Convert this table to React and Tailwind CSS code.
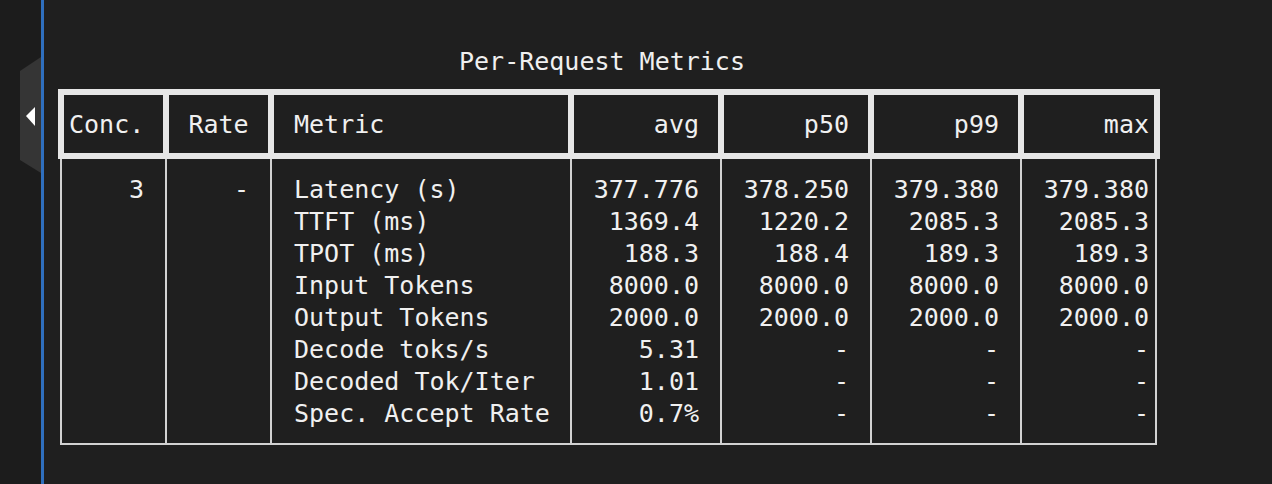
import React from "react";

const rows = [
  ["Latency (s)", "377.776", "378.250", "379.380", "379.380"],
  ["TTFT (ms)", "1369.4", "1220.2", "2085.3", "2085.3"],
  ["TPOT (ms)", "188.3", "188.4", "189.3", "189.3"],
  ["Input Tokens", "8000.0", "8000.0", "8000.0", "8000.0"],
  ["Output Tokens", "2000.0", "2000.0", "2000.0", "2000.0"],
  ["Decode toks/s", "5.31", "-", "-", "-"],
  ["Decoded Tok/Iter", "1.01", "-", "-", "-"],
  ["Spec. Accept Rate", "0.7%", "-", "-", "-"],
];

function Col({ items, className }) {
  return (
    <div className={"flex flex-col bg-[#1f1f1f] pt-[15px] pb-[13px] " + className}>
      {items.map((t, i) => (
        <div key={i} className="h-[32px] leading-[32px] whitespace-pre">
          {t}
        </div>
      ))}
    </div>
  );
}

export default function App() {
  return (
    <div className="flex h-[484px] w-[1272px] bg-[#1f1f1f] text-[#f0f0f0] font-['DejaVu_Sans_Mono',monospace] text-[25px] overflow-hidden">
      <div className="w-[41px] shrink-0 bg-[#1c1c1c] pl-[20px] pt-[57px]">
        <svg width="21" height="116" viewBox="0 0 21 116">
          <polygon points="0,14 21,0 21,116 0,103" fill="#353535" />
          <polygon points="6,59 15,50 15,69" fill="#ffffff" />
        </svg>
      </div>
      <div className="w-[3px] shrink-0 bg-[#2f6fbe]" />
      <div className="flex-1 pl-[14px] pt-[46px]">
        <div className="w-[1102px]">
          <div className="h-[32px] leading-[32px] pl-[401px] whitespace-pre mb-[11px]">
            Per-Request Metrics
          </div>
          {/* header */}
          <div className="grid grid-cols-[99px_99px_294px_144px_144px_144px_130px] gap-[6px] p-[6px] bg-[#e6e6e6]">
            <div className="h-[58px] bg-[#1f1f1f] flex items-center pt-[2px] pl-[5px]">Conc.</div>
            <div className="h-[58px] bg-[#1f1f1f] flex items-center pt-[2px] justify-center">Rate</div>
            <div className="h-[58px] bg-[#1f1f1f] flex items-center pt-[2px] pl-[20px]">Metric</div>
            <div className="h-[58px] bg-[#1f1f1f] flex items-center pt-[2px] justify-end pr-[19px]">avg</div>
            <div className="h-[58px] bg-[#1f1f1f] flex items-center pt-[2px] justify-end pr-[19px]">p50</div>
            <div className="h-[58px] bg-[#1f1f1f] flex items-center pt-[2px] justify-end pr-[19px]">p99</div>
            <div className="h-[58px] bg-[#1f1f1f] flex items-center pt-[2px] justify-end pr-[5px]">max</div>
          </div>
          {/* body */}
          <div className="ml-[2px] w-[1097px] grid grid-cols-[103px_103px_298px_148px_148px_148px_133px] gap-x-[2px] px-[2px] pb-[2px] bg-[#d2d2d2]">
            <Col items={["3"]} className="items-end pr-[21px]" />
            <Col items={["-"]} className="items-end pr-[21px]" />
            <Col items={rows.map((r) => r[0])} className="pl-[22px]" />
            <Col items={rows.map((r) => r[1])} className="items-end pr-[21px]" />
            <Col items={rows.map((r) => r[2])} className="items-end pr-[21px]" />
            <Col items={rows.map((r) => r[3])} className="items-end pr-[21px]" />
            <Col items={rows.map((r) => r[4])} className="items-end pr-[6px]" />
          </div>
        </div>
      </div>
    </div>
  );
}
